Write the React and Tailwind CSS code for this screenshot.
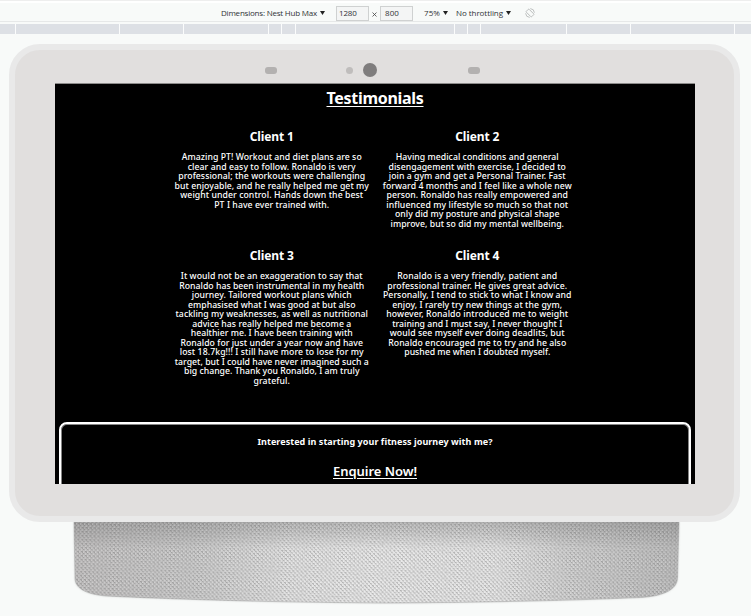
import { useLayoutEffect, useRef } from "react";

// A single line of copy whose tracking is adjusted to fill a given measure.
function Fit({ w, className = "", children }) {
  const ref = useRef(null);
  useLayoutEffect(() => {
    const el = ref.current;
    el.style.letterSpacing = "0px";
    const natural = el.getBoundingClientRect().width;
    const n = el.textContent.length;
    const s = (w - natural) / n;
    el.style.letterSpacing = `${s}px`;
  }, [w]);
  return (
    <span ref={ref} className={`inline-block whitespace-nowrap ${className}`}>
      {children}
    </span>
  );
}

const clients = [
  {
    name: "Client 1",
    lines: [
      ["Amazing PT! Workout and diet plans are so", 180],
      ["clear and easy to follow. Ronaldo is very", 168],
      ["professional; the workouts were challenging", 187],
      ["but enjoyable, and he really helped me get my", 194.5],
      ["weight under control. Hands down the best", 183],
      ["PT I have ever trained with.", 115],
    ],
  },
  {
    name: "Client 2",
    lines: [
      ["Having medical conditions and general", 163],
      ["disengagement with exercise, I decided to", 177.5],
      ["join a gym and get a Personal Trainer. Fast", 177],
      ["forward 4 months and I feel like a whole new", 189],
      ["person. Ronaldo has really empowered and", 181.5],
      ["influenced my lifestyle so much so that not", 182],
      ["only did my posture and physical shape", 164.5],
      ["improve, but so did my mental wellbeing.", 173.5],
    ],
  },
  {
    name: "Client 3",
    lines: [
      ["It would not be an exaggeration to say that", 182],
      ["Ronaldo has been instrumental in my health", 185],
      ["journey. Tailored workout plans which", 160],
      ["emphasised what I was good at but also", 167.5],
      ["tackling my weaknesses, as well as nutritional", 192.5],
      ["advice has really helped me become a", 159],
      ["healthier me. I have been training with", 162],
      ["Ronaldo for just under a year now and have", 182.5],
      ["lost 18.7kg!!! I still have more to lose for my", 184],
      ["target, but I could have never imagined such a", 194],
      ["big change. Thank you Ronaldo, I am truly", 175.5],
      ["grateful.", 36.5],
    ],
  },
  {
    name: "Client 4",
    lines: [
      ["Ronaldo is a very friendly, patient and", 160],
      ["professional trainer. He gives great advice.", 180],
      ["Personally, I tend to stick to what I know and", 188.5],
      ["enjoy, I rarely try new things at the gym,", 170],
      ["however, Ronaldo introduced me to weight", 182],
      ["training and I must say, I never thought I", 170],
      ["would see myself ever doing deadlits, but", 175],
      ["Ronaldo encouraged me to try and he also", 178],
      ["pushed me when I doubted myself.", 146],
    ],
  },
];

function Client({ name, lines }) {
  return (
    <article className="flex flex-col items-center">
      <h2 className="flex h-4 items-center text-[12px] font-bold">
        <Fit w={44}>{name}</Fit>
      </h2>
      <p className="mt-[8px] flex flex-col items-center text-[8.7px] font-medium leading-[9.53px] text-white">
        {lines.map(([t, w]) => (
          <Fit key={t} w={w}>
            {t}
          </Fit>
        ))}
      </p>
    </article>
  );
}

function Caret() {
  return (
    <svg className="h-[4px] w-[5px]" viewBox="0 0 5 4">
      <path d="M0 0h5L2.5 4z" fill="#222" />
    </svg>
  );
}

function Toolbar() {
  return (
    <header className="flex h-[22px] items-center border-b border-[#e6e8e8] pl-[221px] pt-[5px] text-[8px] leading-none text-[#303236]">
      <div className="flex w-[115px] items-center gap-[3px]">
        <Fit w={96}>Dimensions: Nest Hub Max</Fit>
        <Caret />
      </div>
      <div className="flex h-[15px] w-[33px] items-center border border-[#cfd1d1] bg-[#f4f5f5] pl-[2px]">
        <Fit w={17.5}>1280</Fit>
      </div>
      <svg className="mx-[3px] mt-[3px] h-[5px] w-[5px]" viewBox="0 0 5 5">
        <path d="M.5.5l4 4m0-4l-4 4" stroke="#444" strokeWidth=".8" />
      </svg>
      <div className="flex h-[15px] w-[33px] items-center border border-[#cfd1d1] bg-[#f4f5f5] pl-[4px]">
        <Fit w={14}>800</Fit>
      </div>
      <div className="ml-[11px] flex w-[32px] items-center gap-[3px]">
        <Fit w={16}>75%</Fit>
        <Caret />
      </div>
      <div className="flex w-[69px] items-center gap-[3px]">
        <Fit w={47}>No throttling</Fit>
        <Caret />
      </div>
      <svg className="h-[10px] w-[10px]" viewBox="0 0 10 10" fill="none" stroke="#b0b2b2" strokeWidth=".8">
        <rect x="3" y="1.2" width="4" height="7.6" rx=".6" transform="rotate(-45 5 5)" />
        <path d="M5.3.6a4.4 4.4 0 0 1 4.1 4.1M4.7 9.4A4.4 4.4 0 0 1 .6 5.3" />
      </svg>
    </header>
  );
}

function Ruler() {
  return (
    <div className="mt-[2px] flex h-[10px] gap-[1px] bg-[#fbfcfc]">
      <i className="w-[15px] bg-[#dde0e5]" />
      <i className="w-[103px] bg-[#dde0e5]" />
      <i className="w-[63px] bg-[#dde0e5]" />
      <i className="w-[84px] bg-[#dde0e5]" />
      <i className="w-[12px] bg-[#dde0e5]" />
      <i className="w-[13px] bg-[#dde0e5]" />
      <i className="w-[158px] bg-[#dde0e5]" />
      <i className="w-[12px] bg-[#dde0e5]" />
      <i className="w-[12px] bg-[#dde0e5]" />
      <i className="w-[85px] bg-[#dde0e5]" />
      <i className="w-[63px] bg-[#dde0e5]" />
      <i className="w-[103px] bg-[#dde0e5]" />
      <i className="flex-1 bg-[#dde0e5]" />
    </div>
  );
}

const STAND = "M74 0H679L677.5 56C677 68 663 74 641 75.5C560 79 470 80.5 384 81C300 80.5 200 78.5 106 74C85 72 75 66 75 56Z";

function Stand() {
  return (
    <svg className="block h-[94px] w-[751px] shrink-0" viewBox="0 0 751 94">
      <defs>
        <linearGradient id="base" x1="74" x2="679" gradientUnits="userSpaceOnUse">
          <stop offset="0" stopColor="#bfbdbd" />
          <stop offset=".2" stopColor="#c8c8c8" />
          <stop offset=".36" stopColor="#e2e2e2" />
          <stop offset=".5" stopColor="#e8e8e8" />
          <stop offset=".7" stopColor="#e5e5e5" />
          <stop offset=".82" stopColor="#cecece" />
          <stop offset="1" stopColor="#b9b9b9" />
        </linearGradient>
        <linearGradient id="shade" x2="0" y2="1">
          <stop offset="0" stopColor="#707070" stopOpacity=".42" />
          <stop offset=".32" stopColor="#707070" stopOpacity="0" />
        </linearGradient>
        <pattern id="weave" width="4" height="4" patternUnits="userSpaceOnUse" patternTransform="rotate(2)">
          <path d="M0 .5h1.4v1.6M2 2.5h1.4v1.6" fill="none" stroke="#666" strokeOpacity=".5" strokeWidth=".8" />
          <path d="M2 .4v1.6M0 2.4v1.6" stroke="#fff" strokeOpacity=".5" />
        </pattern>
        <filter id="grain" x="0" y="0" width="100%" height="100%">
          <feTurbulence type="fractalNoise" baseFrequency=".5" numOctaves="2" seed="7" />
          <feColorMatrix values="0 0 0 0 .3  0 0 0 0 .3  0 0 0 0 .3  .7 0 0 0 -.33" />
        </filter>
        <filter id="soft"><feGaussianBlur stdDeviation="1.2" /></filter>
        <clipPath id="cut"><path d={STAND} /></clipPath>
      </defs>
      <path d={STAND} fill="#888" opacity=".4" filter="url(#soft)" />
      <g clipPath="url(#cut)">
        <path d={STAND} fill="url(#base)" />
        <rect x="74" width="605" height="82" fill="url(#shade)" />
        <rect x="74" width="605" height="82" fill="url(#weave)" />
        <rect x="74" width="605" height="82" filter="url(#grain)" />
      </g>
      <path d={STAND} fill="none" stroke="#999" strokeWidth=".7" strokeOpacity=".6" />
    </svg>
  );
}

export default function App() {
  return (
    <div className="flex h-[616px] w-[751px] flex-col overflow-hidden bg-[#f8faf9] font-['Open_Sans','Noto_Sans',sans-serif]">
      <div className="h-[3px] shrink-0 border-t border-[#eeeeee] bg-white" />
      <div className="-mt-[3px] shrink-0">
        <Toolbar />
      </div>
      <Ruler />
      <main className="ml-[9px] mt-[10px] flex h-[478px] w-[731px] shrink-0 flex-col rounded-[31px] border-[6px] border-[#e9e9e9] bg-[#e1dfde]">
        <div className="flex h-[33px] items-center pl-[250px] pt-[7px]">
          <i className="h-[7px] w-[12px] rounded-[3px] bg-[#b3b1b0]" />
          <i className="ml-[69px] h-[7px] w-[7px] rounded-full bg-[#bfbdbc]" />
          <i className="ml-[10px] h-[14px] w-[14px] rounded-full bg-[#7f7d7d]" />
          <i className="ml-[91px] h-[7px] w-[12px] rounded-[3px] bg-[#b3b1b0]" />
        </div>
        <section className="ml-[40px] h-[401px] w-[640px] shrink-0 overflow-hidden border-t border-[#8c8b8a] bg-black font-['Noto_Sans','Open_Sans',sans-serif] text-white">
          <h1 className="mt-[4px] flex h-5 items-center justify-center text-[16px] font-bold">
            <Fit w={97} className="underline decoration-1 underline-offset-2">Testimonials</Fit>
          </h1>
          <div className="ml-[114px] mt-[21px] grid w-[411px] grid-cols-2 grid-rows-[119px_174px]">
            {clients.map((c) => (
              <Client key={c.name} {...c} />
            ))}
          </div>
          <div className="mx-[4px] flex h-[90px] flex-col items-center rounded-[8px] border-2 border-white pt-[10px] shadow-[inset_0_0_0_1px_#858585]">
            <p className="flex h-4 items-center text-[9px] font-bold">
              <Fit w={235}>Interested in starting your fitness journey with me?</Fit>
            </p>
            <div className="mt-[12px] flex h-5 items-center text-[13px] font-semibold">
              <Fit w={84} className="underline decoration-1 underline-offset-2">Enquire Now!</Fit>
            </div>
          </div>
        </section>
      </main>
      <Stand />
    </div>
  );
}
